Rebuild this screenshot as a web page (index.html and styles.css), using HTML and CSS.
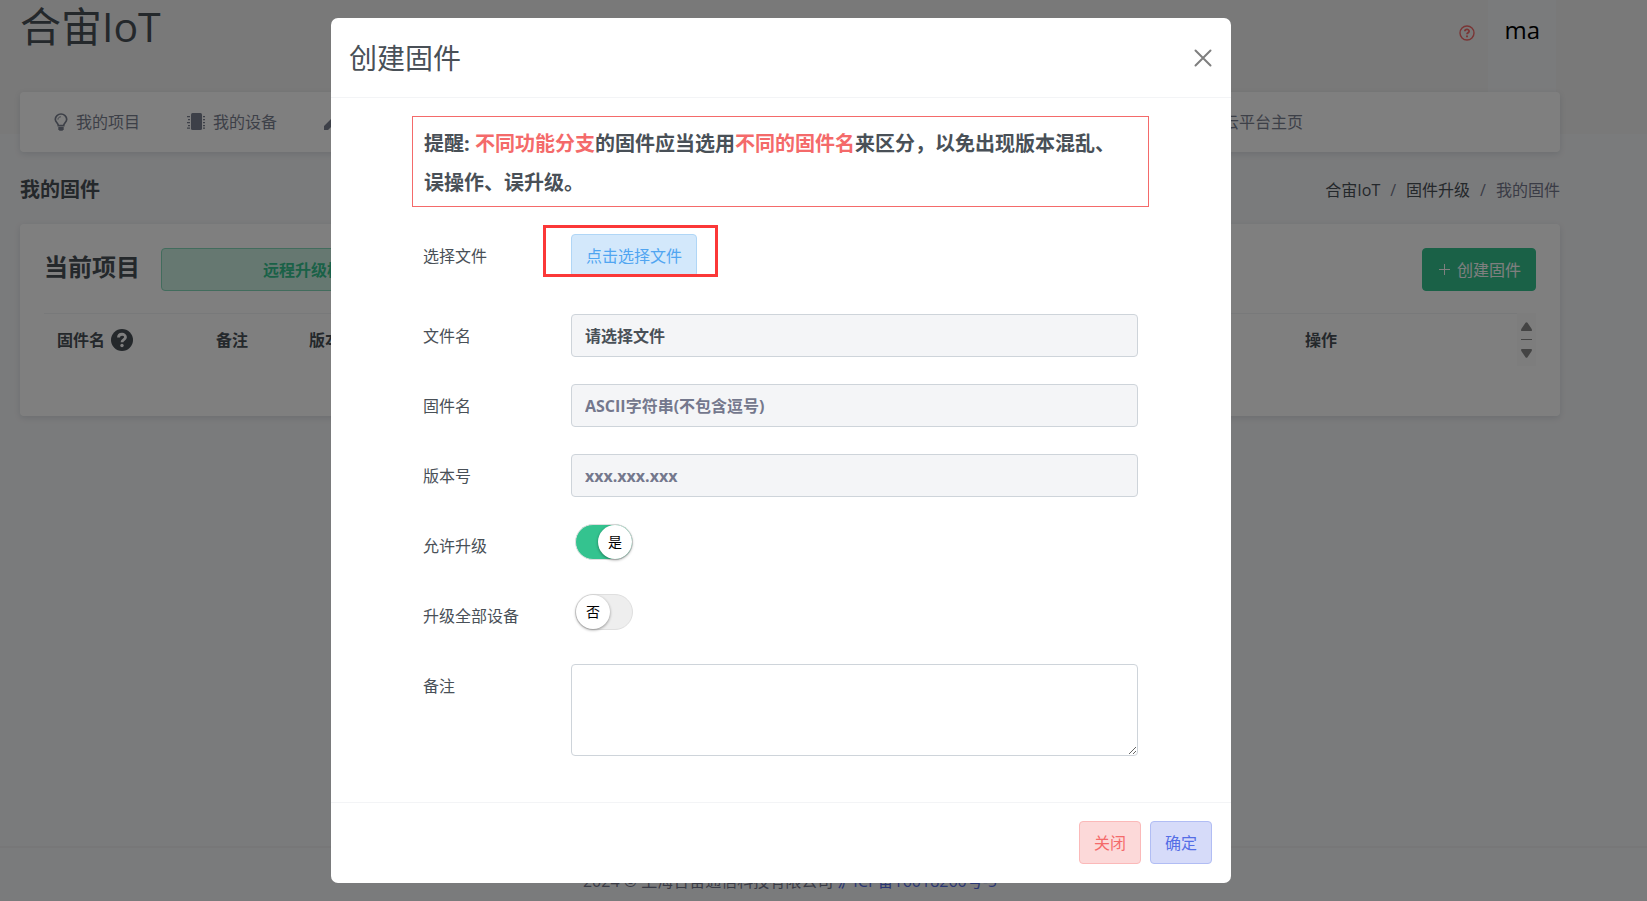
FILE: index.html
```html
<!DOCTYPE html>
<html lang="zh-CN">
<head>
<meta charset="utf-8">
<title>合宙IoT</title>
<link rel="stylesheet" href="styles.css">
</head>
<body>
<div class="page">
  <header class="masthead">
    <div class="topbar">
      <div class="brand">合宙IoT</div>
      <div class="user">
        <a class="help" href="#" aria-label="帮助">
          <svg width="16" height="16" viewBox="0 0 16 16" fill="none" stroke="currentColor"><circle cx="8" cy="8" r="7" stroke-width="1.4"/><path d="M5.9 6.3C5.9 3.8 10.1 3.8 10.1 6.2C10.1 7.8 8 7.7 8 9.3" stroke-width="1.8"/><path d="M8 10.4v1.8" stroke-width="1.9"/></svg>
        </a>
        <a class="account" href="#">ma</a>
      </div>
    </div>
  </header>
  <nav class="nav">
    <a href="#"><svg width="14" height="18" viewBox="0 0 14 18"><path d="M4.3 12.6C4.3 10.2 1.3 9.3 1.3 6.3a5.7 5.3 0 0 1 11.4 0c0 3-3 3.900-3 6.300z" fill="none" stroke="currentColor" stroke-width="1.700"/><path d="M4 6.600C4 4.800 5 4 6.800 3.800" fill="none" stroke="currentColor"/><path d="M4.300 14h5.400v2.200l-1.200 1.500h-3l-1.200-1.500z" fill="currentColor"/></svg>我的项目</a>
    <a href="#"><svg width="18" height="18" viewBox="0 0 18 18" fill="currentColor"><rect x="4" width="11" height="17" rx="1.500"/><path d="M0 3h3v1.300H0zM1 6h2v1.300H1zM0 9h3v1.300H0zM1 12h2v1.300H1zM0 14.500h3v1.300H0zM16 3h2v1.300h-2zM16 6h2v1.300h-2zM16 9h2v1.300h-2zM16 12h2v1.300h-2zM16 14.500h2v1.300h-2z"/></svg>我的设备</a>
    <a href="#"><svg width="18" height="18" viewBox="0 0 18 18" fill="currentColor"><path d="M0 17v-4L11 2l4 4L4 17zM12 1l1-1 4 4-1 1z"/></svg>固件升级</a>
    <a class="nav-last" href="#">合宙云平台主页</a>
  </nav>
  <main class="main">
    <div class="heading">
      <h1>我的固件</h1>
      <div class="crumbs"><a href="#">合宙IoT</a><span>/</span><a href="#">固件升级</a><span>/</span><span>我的固件</span></div>
    </div>
    <section class="card">
      <div class="toolbar">
        <h2>当前项目</h2>
        <button class="btn project" type="button">远程升级模块</button>
        <button class="btn create" type="button"><svg width="11" height="11" viewBox="0 0 11 11"><path d="M5.500 0v11M0 5.500h11" stroke="currentColor"/></svg>创建固件</button>
      </div>
      <div class="grid">
        <table>
          <thead><tr>
            <th class="col-name"><span class="name">固件名 <svg width="22" height="22" viewBox="0 0 22 22"><circle cx="11" cy="11" r="11" fill="#495057"/><path d="M7.500 8.500C7.500 4.200 14.500 4.200 14.500 8.300C14.500 10.700 11 10.600 11 13.300" fill="none" stroke="#fff" stroke-width="2.800"/><circle cx="11" cy="16.500" r="1.700" fill="#fff"/></svg></span></th>
            <th class="col-note">备注</th><th>版本号</th><th class="col-action">操作</th>
          </tr></thead>
        </table>
        <button class="sorter" type="button" aria-label="列显示"><svg width="11" height="36" viewBox="0 0 11 36" fill="#888"><path d="M4.500.8Q5.500-.5 6.500.8L10.700 7Q11.500 9 10 9H1Q-.5 9 .3 7zM0 17h11v1H0zM4.500 35.200Q5.500 36.500 6.500 35.200L10.700 29Q11.500 27 10 27H1Q-.5 27 .3 29z"/></svg></button>
      </div>
    </section>
  </main>
  <footer class="footer">2024 © 上海合宙通信科技有限公司 <a href="#">沪ICP备16018260号-5</a></footer>
</div>

<div class="backdrop">
  <form class="modal" role="dialog" aria-labelledby="dialog-title">
    <div class="modal-head">
      <h2 id="dialog-title">创建固件</h2>
      <button class="close" type="button" aria-label="关闭窗口"><svg width="18" height="18" viewBox="0 0 18 18"><path d="M1.500 1.500l15 15M16.500 1.500l-15 15" stroke="#7f7f7f" stroke-width="2" stroke-linecap="round"/></svg></button>
    </div>
    <div class="modal-body">
      <p class="notice">提醒: <em>不同功能分支</em>的固件应当选用<em>不同的固件名</em>来区分，以免出现版本混乱、误操作、误升级。</p>
      <div class="fields">
        <div class="row row-file"><label for="pick">选择文件</label><div class="pick"><button class="btn info" id="pick" type="button">点击选择文件</button><span class="marker"></span></div></div>
        <div class="row"><label for="file">文件名</label><input class="text" id="file" type="text" value="请选择文件" readonly></div>
        <div class="row"><label for="name">固件名</label><input class="text" id="name" type="text" placeholder="ASCII字符串(不包含逗号)"></div>
        <div class="row"><label for="version">版本号</label><input class="text" id="version" type="text" placeholder="xxx.xxx.xxx"></div>
        <div class="row"><label for="allow">允许升级</label><span class="switch"><input id="allow" type="checkbox" checked><span class="knob">是</span></span></div>
        <div class="row"><label for="all">升级全部设备</label><span class="switch"><input id="all" type="checkbox"><span class="knob">否</span></span></div>
        <div class="row"><label for="note">备注</label><textarea class="text note" id="note"></textarea></div>
      </div>
    </div>
    <div class="modal-foot">
      <button class="btn danger" type="button">关闭</button>
      <button class="btn primary" type="button">确定</button>
    </div>
  </form>
</div>
</body>
</html>
```

FILE: styles.css
```css
* { box-sizing: border-box; }
body {
  margin: 0;
  background: #f5f6f8;
  color: #495057;
  font: 16px/24px "Open Sans", "Noto Sans CJK SC", sans-serif;
}
button, input, textarea { font: inherit; color: inherit; }
h1, h2, p { margin: 0; }
a { color: inherit; text-decoration: none; }
svg { flex: none; }

.page {
  display: flex;
  flex-direction: column;
  height: 100vh;
  overflow: hidden;
}
.masthead {
  flex: none;
  height: 134px;
  padding: 0 87px 0 20px;
  background: #f2f2f2;
}
.topbar {
  display: flex;
  justify-content: space-between;
  height: 92px;
}
.brand { font-size: 41px; line-height: 52px; }
.user { display: flex; }
.help { margin-right: 13px; padding-top: 23px; color: #f46a6a; }
.account {
  margin-right: 4px;
  padding: 0 16px;
  background: #f5f6f8;
  color: #000;
  font-size: 24px;
  line-height: 60px;
}
.nav {
  display: flex;
  align-items: center;
  flex: none;
  gap: 47px;
  height: 60px;
  margin: -42px 87px 0 20px;
  padding: 0 34px;
  border-radius: 4px;
  background: #fff;
  box-shadow: 0 2px 6px rgba(18, 38, 63, .12);
  color: #7b8190;
}
.nav a { display: flex; align-items: center; gap: 8px; }
.nav .nav-last { margin: 0 223px 0 auto; }

.main { flex: 1; padding: 24px 87px 0 20px; }
.heading {
  display: flex;
  align-items: center;
  justify-content: space-between;
  height: 28px;
  margin-bottom: 20px;
}
h1 { font-size: 20px; }
.crumbs { display: flex; gap: 10px; color: #74788d; }
.crumbs a { color: #495057; }

.card {
  height: 192px;
  padding: 24px;
  border-radius: 4px;
  background: #fff;
  box-shadow: 0 2px 6px rgba(18, 38, 63, .12);
}
.toolbar { display: flex; align-items: flex-start; margin-bottom: 22px; }
.toolbar h2 { margin-right: 21px; font-size: 24px; line-height: 38px; }
.btn {
  height: 43px;
  padding: 0 14px;
  border: 1px solid;
  border-radius: 4px;
  line-height: 40px;
}
.project {
  width: 300px;
  border-color: #85d9ba;
  background: #cdf0e3;
  color: #34c38f;
  font-weight: 600;
}
.create {
  display: flex;
  align-items: center;
  gap: 7px;
  margin-left: auto;
  padding-left: 16px;
  border-color: #34c38f;
  background: #34c38f;
  color: #fff;
}
.grid { display: flex; align-items: flex-start; }
table {
  flex: 1;
  width: 100%;
  border-collapse: collapse;
  border-top: 1px solid #f1f2f4;
  table-layout: fixed;
}
th { height: 53px; padding: 0 13px; font-weight: 600; text-align: left; }
.col-name { width: 159px; }
.col-note { width: 93px; }
.col-action { width: 225px; }
.name { display: flex; align-items: center; gap: 6px; }
.sorter {
  display: flex;
  align-items: center;
  justify-content: center;
  width: 19px;
  height: 53px;
  padding: 0;
  border: 0;
  background: #fafafa;
}
.footer {
  flex: none;
  height: 55px;
  padding-right: 67px;
  border-top: 2px solid #eeeff1;
  color: #74788d;
  line-height: 66px;
  text-align: center;
}
.footer a { color: #556ee6; }

.backdrop {
  position: fixed;
  inset: 0;
  display: flex;
  align-items: flex-start;
  justify-content: center;
  padding: 18px 85px 0 0;
  background: rgba(0, 0, 0, .5);
}
.modal {
  width: 900px;
  border-radius: 7px;
  background: #fff;
}
.modal-head {
  display: flex;
  align-items: center;
  justify-content: space-between;
  height: 80px;
  padding: 0 19px 0 18px;
  border-bottom: 1px solid #f3f4f6;
}
.modal-head h2 { font-size: 28px; font-weight: 400; line-height: 42px; }
.close { display: flex; padding: 0; border: 0; background: none; }
.modal-body { padding: 18px 82px 46px 81px; }
.notice {
  padding: 7px 30px 4px 11px;
  border: 1px solid #f46a6a;
  font-size: 20px;
  font-weight: 700;
  line-height: 39px;
}
.notice em { color: #f46a6a; font-style: normal; }
.fields {
  display: flex;
  flex-direction: column;
  gap: 27px;
  padding: 27px 11px 0;
}
.row { display: flex; height: 43px; }
.row-file { height: 53px; }
.row > label { width: 148px; line-height: 44px; }
.row:last-child { height: auto; }
.pick { position: relative; }
.info {
  border-color: #b0d6f6;
  background: #d3e8fb;
  color: #50a5f1;
}
.marker {
  position: absolute;
  top: -9px;
  left: -28px;
  width: 175px;
  height: 52px;
  border: 3px solid #fb3838;
  pointer-events: none;
}
.text {
  flex: 1;
  min-width: 0;
  padding: 0 13px;
  border: 1px solid #ced4da;
  border-radius: 4px;
  background: #f4f5f7;
  font-weight: 700;
}
.text::placeholder { color: #74788d; opacity: 1; }
.note { height: 92px; background: #fff; }
.switch {
  position: relative;
  width: 58px;
  height: 36px;
  margin-left: 4px;
}
.switch input {
  width: 100%;
  height: 100%;
  margin: 0;
  border: 1px solid #dfdfdf;
  border-radius: 18px;
  appearance: none;
  background: #eee;
}
.switch input:checked { background: #34c38f; }
.knob {
  position: absolute;
  top: 1px;
  left: 1px;
  width: 34px;
  height: 34px;
  border-radius: 50%;
  background: #fff;
  box-shadow: 0 1px 3px rgba(0, 0, 0, .4);
  color: #000;
  font-size: 14px;
  line-height: 34px;
  text-align: center;
  pointer-events: none;
}
.switch input:checked + .knob { left: 23px; }
.modal-foot {
  display: flex;
  justify-content: flex-end;
  gap: 9px;
  padding: 18px 19px 19px;
  border-top: 1px solid #f3f4f6;
}
.danger { border-color: #fbb9b9; background: #fcd9d9; color: #f46a6a; }
.primary { border-color: #b1bdf4; background: #d6dbf9; color: #556ee6; }
```
